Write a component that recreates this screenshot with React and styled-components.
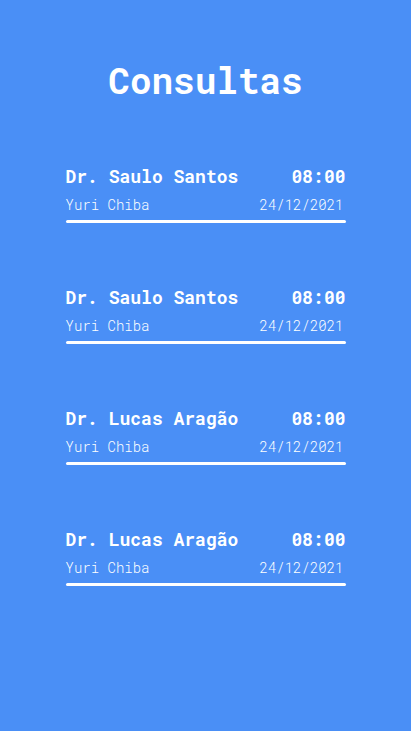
import styled, { createGlobalStyle } from "styled-components";

const consultas = [
  { medico: "Dr. Saulo Santos", hora: "08:00", paciente: "Yuri Chiba", data: "24/12/2021" },
  { medico: "Dr. Saulo Santos", hora: "08:00", paciente: "Yuri Chiba", data: "24/12/2021" },
  { medico: "Dr. Lucas Aragão", hora: "08:00", paciente: "Yuri Chiba", data: "24/12/2021" },
  { medico: "Dr. Lucas Aragão", hora: "08:00", paciente: "Yuri Chiba", data: "24/12/2021" },
];

export default function App() {
  return (
    <>
      <GlobalStyle />
      <Page>
        <Title>Consultas</Title>
        <List>
          {consultas.map((c, i) => (
            <Item key={i}>
              <Row>
                <Name>{c.medico}</Name>
                <Name>{c.hora}</Name>
              </Row>
              <Row sub>
                <Info>{c.paciente}</Info>
                <Info>{c.data}</Info>
              </Row>
              <Line />
            </Item>
          ))}
        </List>
      </Page>
    </>
  );
}

const GlobalStyle = createGlobalStyle`
  body {
    margin: 0;
    background: #4a8ff6;
    font-family: "Roboto Mono", "DejaVu Sans Mono", "Liberation Mono", monospace;
  }
`;

const Page = styled.main`
  min-height: 731px;
  background: #4a8ff6;
  color: #ffffff;
  display: flex;
  flex-direction: column;
  align-items: center;
  padding-top: 59px;
  box-sizing: border-box;
`;

const Title = styled.h1`
  margin: 0;
  font-size: 36px;
  line-height: 42px;
  font-weight: 700;
`;

const List = styled.div`
  width: 280px;
  margin-top: 64px;
  display: flex;
  flex-direction: column;
  gap: 63px;
`;

const Item = styled.div`
  display: flex;
  flex-direction: column;
`;

const Row = styled.div`
  display: flex;
  justify-content: space-between;
  align-items: center;
  margin-top: ${props => (props.sub ? "9px" : "0")};
  padding-right: ${props => (props.sub ? "2px" : "0")};
`;

const Name = styled.span`
  font-size: 18px;
  line-height: 22px;
  font-weight: 700;
`;

const Info = styled.span`
  font-size: 14px;
  line-height: 18px;
  font-weight: 300;
`;

const Line = styled.div`
  margin-top: 6px;
  height: 3px;
  border-radius: 2px;
  background: #ffffff;
`;
